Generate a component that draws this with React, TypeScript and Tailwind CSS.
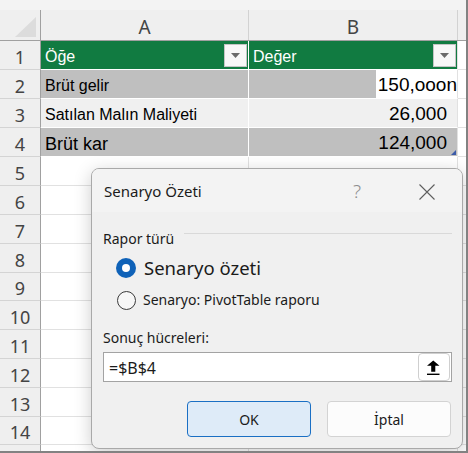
import React from "react";

const rowHeights5to14 = [
  "h-[29px]", "h-[29px]", "h-[29px]", "h-[29px]", "h-[28px]",
  "h-[29px]", "h-[29px]", "h-[29px]", "h-[29px]", "h-[28px]",
];

function RowHeader({ n }: { n?: number }) {
  return (
    <div className="w-[41px] shrink-0 flex items-center justify-center border-r border-b border-r-[#a0a0a0] border-b-[#d4d4d4] bg-[#efefef] pt-[3px] font-['Noto_Sans',sans-serif] text-[18px] leading-none text-[#444]">
      {n}
    </div>
  );
}

function EmptyRow({ n, h }: { n?: number; h: string }) {
  return (
    <div className={`flex ${h}`}>
      <RowHeader n={n} />
      <div className="w-[208px] shrink-0 border-r border-b border-[#e1e1e1]" />
      <div className="w-[209px] shrink-0 border-r border-b border-[#e1e1e1]" />
      <div className="flex-1 border-b border-[#e1e1e1]" />
    </div>
  );
}

function FilterButton() {
  return (
    <div className="w-[23px] h-[23px] shrink-0 flex items-center justify-center bg-[#f7f7f7] border border-[#c4c4c4]">
      <svg width="9" height="5" viewBox="0 0 9 5">
        <path d="M0 0 H9 L4.5 5 Z" fill="#6a6a6a" />
      </svg>
    </div>
  );
}

function Spreadsheet() {
  const cell = "font-['Liberation_Sans',Arial,sans-serif] text-black";
  return (
    <div className="flex flex-col h-full">
      {/* strip above the column headers */}
      <div className="h-[10px] shrink-0 bg-[#f3f3f3]" />
      {/* column headers */}
      <div className="flex h-[31px] shrink-0 bg-[#efefef] border-b border-[#a0a0a0]">
        <div className="w-[41px] shrink-0 border-r border-[#a0a0a0] flex items-end justify-end pr-[3px] pb-[2px]">
          <svg width="22" height="21" viewBox="0 0 22 21">
            <path d="M21 0 V20 H0 Z" fill="#dcdcdc" />
          </svg>
        </div>
        <div className="w-[208px] shrink-0 border-r border-[#d2d2d2] flex items-center justify-center pt-[4px] font-['Noto_Sans',sans-serif] text-[19px] leading-none text-[#444]">
          A
        </div>
        <div className="w-[209px] shrink-0 border-r border-[#d2d2d2] flex items-center justify-center pt-[4px] font-['Noto_Sans',sans-serif] text-[19px] leading-none text-[#444]">
          B
        </div>
        <div className="flex-1" />
      </div>

      {/* row 1: table header */}
      <div className="flex h-[29px] shrink-0">
        <RowHeader n={1} />
        <div className={`w-[208px] shrink-0 border-r border-b border-white bg-[#117b41] flex items-center justify-between pl-[4px] pr-[1px] ${cell}`}>
          <span className="text-[16px] leading-[18px] text-white pt-[4px]">Öğe</span>
          <FilterButton />
        </div>
        <div className={`w-[209px] shrink-0 border-r border-b border-r-[#e1e1e1] border-b-white bg-[#117b41] flex items-center justify-between pl-[4px] pr-[1px] ${cell}`}>
          <span className="text-[16px] leading-[18px] text-white pt-[4px]">Değer</span>
          <FilterButton />
        </div>
        <div className="flex-1 border-b border-[#e1e1e1]" />
      </div>

      {/* row 2 */}
      <div className="flex h-[29px] shrink-0">
        <RowHeader n={2} />
        <div className={`w-[208px] shrink-0 border-r border-b border-white bg-[#bfbfbf] flex items-end pl-[4px] pb-[3px] ${cell}`}>
          <span className="text-[16px] leading-[18px]">Brüt gelir</span>
        </div>
        <div className={`w-[209px] shrink-0 border-r border-b border-r-[#e1e1e1] border-b-white flex ${cell}`}>
          <div className="flex-1 bg-[#bfbfbf]" />
          <div className="w-[81px] shrink-0 bg-white flex items-end justify-end pb-[2px]">
            <span className="text-[19px] leading-[22px] whitespace-nowrap">150,ooon</span>
          </div>
        </div>
        <div className="flex-1 border-b border-[#e1e1e1]" />
      </div>

      {/* row 3 */}
      <div className="flex h-[29px] shrink-0">
        <RowHeader n={3} />
        <div className={`w-[208px] shrink-0 border-r border-b border-white bg-[#f0f0f0] flex items-end pl-[4px] pb-[3px] ${cell}`}>
          <span className="text-[16px] leading-[18px]">Satılan Malın Maliyeti</span>
        </div>
        <div className={`w-[209px] shrink-0 border-r border-b border-r-[#e1e1e1] border-b-white bg-[#f0f0f0] flex items-end justify-end pr-[10px] pb-[2px] ${cell}`}>
          <span className="text-[19px] leading-[22px]">26,000</span>
        </div>
        <div className="flex-1 border-b border-[#e1e1e1]" />
      </div>

      {/* row 4 */}
      <div className="flex h-[29px] shrink-0">
        <RowHeader n={4} />
        <div className={`w-[208px] shrink-0 border-r border-b border-white bg-[#bfbfbf] flex items-end pl-[4px] pb-[2px] ${cell}`}>
          <span className="text-[18px] leading-[20px]">Brüt kar</span>
        </div>
        <div className={`relative w-[209px] shrink-0 border-r border-b border-r-[#e1e1e1] border-b-white bg-[#bfbfbf] flex items-end justify-end pr-[10px] pb-[2px] ${cell}`}>
          <span className="text-[19px] leading-[22px]">124,000</span>
          <div className="absolute right-[1px] bottom-[1px] w-[5px] h-[5px] bg-[#3b5ba9] [clip-path:polygon(100%_0,100%_100%,0_100%)]" />
        </div>
        <div className="flex-1 border-b border-[#e1e1e1]" />
      </div>

      {rowHeights5to14.map((h, i) => (
        <EmptyRow key={i} n={i + 5} h={h} />
      ))}
      <div className="flex flex-1">
        <div className="w-[41px] shrink-0 border-r border-[#a0a0a0] bg-[#efefef]" />
        <div className="w-[208px] shrink-0 border-r border-[#e1e1e1]" />
        <div className="w-[209px] shrink-0 border-r border-[#e1e1e1]" />
        <div className="flex-1" />
      </div>
    </div>
  );
}

function Dialog() {
  return (
    <div className="absolute left-[91px] top-[168px] w-[372px] h-[281px] rounded-[8px] border border-[#a9a9a9] bg-[#f0f0f0] shadow-[0_4px_18px_rgba(0,0,0,0.2)] overflow-hidden flex flex-col font-['Noto_Sans',sans-serif] text-[#1b1b1b]">
      {/* title bar */}
      <div className="h-[43px] shrink-0 bg-[#f3f3f3] flex items-center pl-[12px] pr-[27px] pt-[2px]">
        <span className="text-[15px] leading-none flex-1">Senaryo Özeti</span>
        <span className="text-[19px] font-light leading-none text-[#8e8e8e] mr-[58px]">?</span>
        <svg width="16" height="16" viewBox="0 0 16 16">
          <path d="M0.5 0.5 L15.5 15.5 M15.5 0.5 L0.5 15.5" stroke="#5e5e5e" strokeWidth="1.1" />
        </svg>
      </div>

      {/* body */}
      <div className="flex-1 flex flex-col pl-[11px] pr-[10px] pb-[11px]">
        <div className="flex items-start mt-[17px] h-[20px]">
          <span className="text-[14px] leading-[20px]">Rapor türü</span>
          <div className="flex-1 h-px bg-[#d9d9d9] ml-[10px] mt-[4px]" />
        </div>

        <div className="flex items-center h-[26px] mt-[6px] pl-[13px]">
          <div className="w-[20px] h-[20px] rounded-full bg-[#0f62b8] flex items-center justify-center">
            <div className="w-[8px] h-[8px] rounded-full bg-white" />
          </div>
          <span className="ml-[8px] text-[18.5px] leading-[26px]">Senaryo özeti</span>
        </div>

        <div className="flex items-center h-[20px] mt-[9px] pl-[13px]">
          <div className="w-[20px] h-[20px] flex items-center justify-center">
            <div className="w-[19px] h-[19px] rounded-full border border-[#3a3a3a] bg-[#f7f7f7]" />
          </div>
          <span className="ml-[7px] text-[14px] leading-[20px]">Senaryo: PivotTable raporu</span>
        </div>

        <span className="mt-[18px] text-[14px] leading-[20px]">Sonuç hücreleri:</span>

        <div className="mt-[4px] h-[30px] bg-white border border-[#a3a3a3] flex items-center pl-[5px] pr-[1px]">
          <span className="flex-1 text-[16px] leading-none pt-[1px]">=$B$4</span>
          <div className="w-[32px] h-[28px] rounded-[4px] border border-[#cfcfcf] bg-white flex items-center justify-center pr-[2px]">
            <svg width="13" height="15" viewBox="0 0 13 15">
              <path d="M6.25 0.5 L12.5 5.8 H8.3 V11.8 H4.2 V5.8 H0 Z" fill="#000" />
              <rect x="0" y="13.6" width="12.5" height="1.4" fill="#000" />
            </svg>
          </div>
        </div>

        <div className="mt-[19px] flex justify-end gap-[16px] pr-[1px]">
          <button className="w-[124px] h-[36px] rounded-[4px] border border-[#1a6fc4] bg-[#deebf8] text-[14px] text-[#1b1b1b]">
            OK
          </button>
          <button className="w-[124px] h-[36px] rounded-[4px] border border-[#d3d3d3] bg-[#fcfcfc] text-[14px] text-[#1b1b1b]">
            İptal
          </button>
        </div>
      </div>
    </div>
  );
}

export default function App() {
  return (
    <div className="relative w-[468px] h-[453px] overflow-hidden bg-white border-r-2 border-b-2 border-[#828282]">
      <Spreadsheet />
      <Dialog />
    </div>
  );
}
